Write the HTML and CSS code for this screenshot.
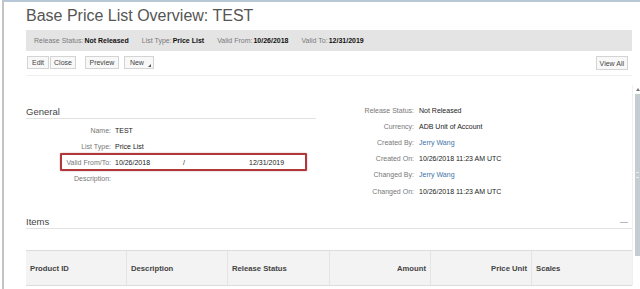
FILE: index.html
```html
<!DOCTYPE html>
<html lang="en">

<head>
    <meta charset="UTF-8">
    <title>Base Price List Overview: TEST</title>
    <link rel="stylesheet" href="styles.css">
</head>

<body>
    <div class="frame">
        <div class="page-head">
            <h1 class="title">Base Price List Overview: TEST</h1>
            <div class="status-bar">
                <span><span class="k">Release Status:</span><b>Not Released</b></span>
                <span><span class="k">List Type:</span><b>Price List</b></span>
                <span><span class="k">Valid From:</span><b>10/26/2018</b></span>
                <span><span class="k">Valid To:</span><b>12/31/2019</b></span>
            </div>
            <div class="toolbar">
                <div class="btn-group">
                    <span class="btn edit">Edit</span>
                    <span class="btn">Close</span>
                </div>
                <span class="btn preview">Preview</span>
                <span class="btn new">New <i class="caret"></i></span>
                <span class="btn view-all">View All</span>
            </div>
        </div>

        <div class="page-body">
            <div class="content">
                <div class="overview">
                    <div class="col-left">
                        <h2 class="section-title">General</h2>
                        <div class="field"><span class="label">Name:</span><span class="value">TEST</span></div>
                        <div class="field"><span class="label">List Type:</span><span class="value">Price List</span></div>
                        <div class="field marked">
                            <span class="label">Valid From/To:</span>
                            <span class="value dates"><span>10/26/2018</span><span class="slash">/</span><span>12/31/2019</span></span>
                            <span class="highlight"></span>
                        </div>
                        <div class="field"><span class="label">Description:</span><span class="value"></span></div>
                    </div>
                    <div class="col-right">
                        <div class="field"><span class="label">Release Status:</span><span class="value">Not Released</span></div>
                        <div class="field"><span class="label">Currency:</span><span class="value">ADB Unit of Account</span></div>
                        <div class="field"><span class="label">Created By:</span><span class="value link">Jerry Wang</span></div>
                        <div class="field"><span class="label">Created On:</span><span class="value">10/26/2018 11:23 AM UTC</span></div>
                        <div class="field"><span class="label">Changed By:</span><span class="value link">Jerry Wang</span></div>
                        <div class="field"><span class="label">Changed On:</span><span class="value">10/26/2018 11:23 AM UTC</span></div>
                    </div>
                </div>

                <div class="items">
                    <h2 class="section-title items-title">Items <span class="collapse">&mdash;</span></h2>
                    <div class="grid-head">
                        <div class="cell">Product ID</div>
                        <div class="cell">Description</div>
                        <div class="cell">Release Status</div>
                        <div class="cell num">Amount</div>
                        <div class="cell num">Price Unit</div>
                        <div class="cell">Scales</div>
                    </div>
                </div>
            </div>
            <div class="scrollbar">
                <span class="arrow"></span>
                <div class="thumb"><i></i></div>
            </div>
        </div>
    </div>
</body>

</html>
```

FILE: styles.css
```css
* {
    margin: 0;
    padding: 0;
    box-sizing: border-box;
}

html,
body {
    width: 100%;
    height: 100%;
    background: #fff;
    overflow: hidden;
}

body {
    font-family: "Liberation Sans", Arial, sans-serif;
    color: #333;
}

.frame {
    height: 100%;
    margin-left: 2px;
    border-left: 2px solid #c4c4c4;
    border-top: 2px solid #b7c7d6;
}

.page-head {
    padding: 4px 8px 0 22px;
}

.title {
    font-size: 16px;
    font-weight: normal;
    line-height: 20px;
    color: #555;
}

.status-bar {
    margin-top: 4px;
    height: 21px;
    background: #e4e4e4;
    display: flex;
    align-items: center;
    gap: 13px;
    padding-left: 8px;
    font-size: 7px;
}

.status-bar .k {
    color: #7a7a7a;
}

.status-bar b {
    margin-left: 1px;
    color: #111;
}

.toolbar {
    margin-top: 5px;
    display: flex;
    align-items: flex-start;
    padding-bottom: 5px;
    border-bottom: 1px solid #f0f0f0;
    font-size: 7px;
}

.btn-group {
    display: flex;
    gap: 1px;
    margin-left: 1px;
}

.btn {
    display: inline-flex;
    align-items: center;
    height: 13px;
    padding: 0 3px;
    border: 1px solid #d4d4d4;
    background: #f8f8f8;
    color: #444;
}

.btn.edit {
    padding: 0 4px;
}

.preview {
    margin-left: 9px;
    padding: 0 3.5px;
}

.new {
    margin-left: 5px;
    padding: 0 2px 0 5px;
}

.caret {
    display: inline-block;
    width: 0;
    height: 0;
    margin: 5px 0 0 4px;
    border-left: 3px solid transparent;
    border-bottom: 3px solid #555;
}

.view-all {
    margin-left: auto;
    margin-right: 4px;
    height: 14px;
}

.page-body {
    display: flex;
}

.content {
    flex: 1;
    padding-left: 22px;
}

.overview {
    display: flex;
    align-items: flex-start;
    margin-top: 26px;
}

.col-left {
    width: 290px;
    padding-top: 4px;
}

.col-right {
    margin-left: 14px;
}

.section-title {
    font-size: 9.5px;
    font-weight: normal;
    line-height: 12px;
    color: #444;
    border-bottom: 1px solid #e2e2e2;
}

.col-left .section-title {
    margin-bottom: 3px;
}

.field {
    display: flex;
    height: 16.2px;
    align-items: center;
    font-size: 7px;
}

.field .label {
    width: 85px;
    text-align: right;
    color: #777;
}

.field .value {
    margin-left: 4px;
    color: #222;
}

.col-right .field .label {
    width: 84px;
}

.col-right .field .value {
    margin-left: 5px;
}

.value.link {
    color: #3b73a8;
}

.dates {
    display: flex;
}

.dates .slash {
    margin: 0 0 0 33px;
    width: 66px;
}

.marked {
    position: relative;
}

.highlight {
    position: absolute;
    left: 34px;
    top: -1px;
    width: 247px;
    height: 18px;
    border: 2px solid #b03838;
    border-radius: 1px;
    box-shadow: 0 0 2px rgba(120, 0, 0, 0.35);
}

.items {
    margin-top: 16px;
}

.items-title {
    display: flex;
    justify-content: space-between;
    align-items: flex-end;
    line-height: 13px;
    padding-right: 4px;
}

.collapse {
    font-size: 8px;
    color: #777;
    line-height: 8px;
    margin-bottom: 2px;
}

.grid-head {
    margin-top: 21px;
    height: 36px;
    display: grid;
    grid-template-columns: 101px 101px 102px 101px 101px 1fr;
    background: #f3f3f3;
    border-top: 1px solid #dcdcdc;
    border-bottom: 1px solid #dcdcdc;
}

.cell {
    display: flex;
    align-items: center;
    padding: 0 4px;
    font-size: 7.7px;
    font-weight: bold;
    color: #444;
    border-right: 1px solid #e4e4e4;
}

.cell:last-child {
    border-right: none;
}

.cell.num {
    justify-content: flex-end;
}

.scrollbar {
    width: 8px;
    margin-top: 9px;
    display: flex;
    flex-direction: column;
    align-items: flex-end;
    border-left: 1px solid #f0f0f0;
}

.arrow {
    width: 5px;
    height: 6px;
    margin-top: 3px;
    display: flex;
    justify-content: center;
}

.arrow::before {
    content: "";
    width: 0;
    height: 0;
    border-left: 2.5px solid transparent;
    border-right: 2.5px solid transparent;
    border-bottom: 3px solid #777;
}

.thumb {
    width: 5px;
    height: 162px;
    background: #c6cdd1;
    display: flex;
    align-items: center;
    justify-content: center;
}

.thumb i {
    width: 3px;
    height: 6px;
    border-top: 1px solid #e8eced;
    border-bottom: 1px solid #e8eced;
}
```
